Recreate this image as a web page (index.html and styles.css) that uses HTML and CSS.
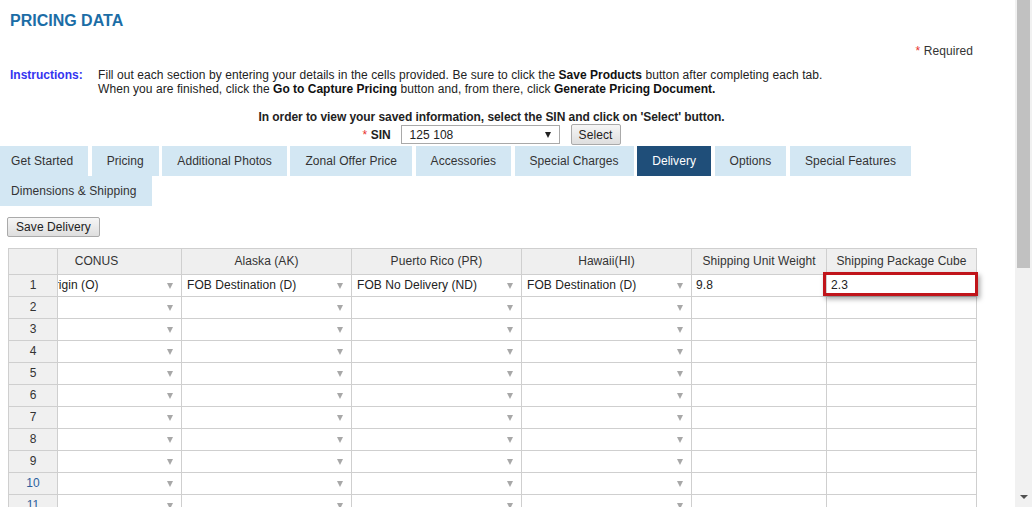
FILE: index.html
```html
<!DOCTYPE html>
<html lang="en">
<head>
<meta charset="utf-8">
<title>Pricing Data</title>
<link rel="stylesheet" href="styles.css">
</head>
<body>
<div class="page">
  <main class="main">
    <div class="head">
      <h1 class="title">PRICING DATA</h1>
      <div class="required"><span class="star">*</span> Required</div>
      <div class="instructions">
        <div class="instr-label">Instructions:</div>
        <div class="instr-text">Fill out each section by entering your details in the cells provided. Be sure to click the <b>Save Products</b> button after completing each tab.<br>When you are finished, click the <b>Go to Capture Pricing</b> button and, from there, click <b>Generate Pricing Document.</b></div>
      </div>
      <p class="view-note">In order to view your saved information, select the SIN and click on 'Select' button.</p>
      <div class="sin-row">
        <span class="sin-label"><span class="star">*</span> <b>SIN</b></span>
        <div class="sin-select"><span>125 108</span><span class="caret-dark"></span></div>
        <button class="btn btn-select">Select</button>
      </div>
    </div>
    <nav class="tabs">
      <span class="tab">Get Started</span>
      <span class="tab">Pricing</span>
      <span class="tab">Additional Photos</span>
      <span class="tab">Zonal Offer Price</span>
      <span class="tab">Accessories</span>
      <span class="tab">Special Charges</span>
      <span class="tab active">Delivery</span>
      <span class="tab">Options</span>
      <span class="tab">Special Features</span>
      <span class="tab">Dimensions &amp; Shipping</span>
    </nav>
    <button class="btn btn-save">Save Delivery</button>
    <div class="grid">
      <div class="hc rn"></div>
      <div class="hc clip"><div class="shift">CONUS</div></div>
      <div class="hc">Alaska (AK)</div>
      <div class="hc">Puerto Rico (PR)</div>
      <div class="hc">Hawaii(HI)</div>
      <div class="hc">Shipping Unit Weight</div>
      <div class="hc">Shipping Package Cube</div>

      <div class="c rn">1</div>
      <div class="c clip"><div class="shift dd"><span>FOB Origin (O)</span><i class="caret"></i></div></div>
      <div class="c dd"><span>FOB Destination (D)</span><i class="caret"></i></div>
      <div class="c dd"><span>FOB No Delivery (ND)</span><i class="caret"></i></div>
      <div class="c dd"><span>FOB Destination (D)</span><i class="caret"></i></div>
      <div class="c txt">9.8</div>
      <div class="c txt sel">2.3<span class="focus-box"></span></div>

      <div class="c rn">2</div><div class="c clip"><div class="shift dd"><span></span><i class="caret"></i></div></div><div class="c dd"><span></span><i class="caret"></i></div><div class="c dd"><span></span><i class="caret"></i></div><div class="c dd"><span></span><i class="caret"></i></div><div class="c txt"></div><div class="c txt"></div>
      <div class="c rn">3</div><div class="c clip"><div class="shift dd"><span></span><i class="caret"></i></div></div><div class="c dd"><span></span><i class="caret"></i></div><div class="c dd"><span></span><i class="caret"></i></div><div class="c dd"><span></span><i class="caret"></i></div><div class="c txt"></div><div class="c txt"></div>
      <div class="c rn">4</div><div class="c clip"><div class="shift dd"><span></span><i class="caret"></i></div></div><div class="c dd"><span></span><i class="caret"></i></div><div class="c dd"><span></span><i class="caret"></i></div><div class="c dd"><span></span><i class="caret"></i></div><div class="c txt"></div><div class="c txt"></div>
      <div class="c rn">5</div><div class="c clip"><div class="shift dd"><span></span><i class="caret"></i></div></div><div class="c dd"><span></span><i class="caret"></i></div><div class="c dd"><span></span><i class="caret"></i></div><div class="c dd"><span></span><i class="caret"></i></div><div class="c txt"></div><div class="c txt"></div>
      <div class="c rn">6</div><div class="c clip"><div class="shift dd"><span></span><i class="caret"></i></div></div><div class="c dd"><span></span><i class="caret"></i></div><div class="c dd"><span></span><i class="caret"></i></div><div class="c dd"><span></span><i class="caret"></i></div><div class="c txt"></div><div class="c txt"></div>
      <div class="c rn">7</div><div class="c clip"><div class="shift dd"><span></span><i class="caret"></i></div></div><div class="c dd"><span></span><i class="caret"></i></div><div class="c dd"><span></span><i class="caret"></i></div><div class="c dd"><span></span><i class="caret"></i></div><div class="c txt"></div><div class="c txt"></div>
      <div class="c rn">8</div><div class="c clip"><div class="shift dd"><span></span><i class="caret"></i></div></div><div class="c dd"><span></span><i class="caret"></i></div><div class="c dd"><span></span><i class="caret"></i></div><div class="c dd"><span></span><i class="caret"></i></div><div class="c txt"></div><div class="c txt"></div>
      <div class="c rn">9</div><div class="c clip"><div class="shift dd"><span></span><i class="caret"></i></div></div><div class="c dd"><span></span><i class="caret"></i></div><div class="c dd"><span></span><i class="caret"></i></div><div class="c dd"><span></span><i class="caret"></i></div><div class="c txt"></div><div class="c txt"></div>
      <div class="c rn link">10</div><div class="c clip"><div class="shift dd"><span></span><i class="caret"></i></div></div><div class="c dd"><span></span><i class="caret"></i></div><div class="c dd"><span></span><i class="caret"></i></div><div class="c dd"><span></span><i class="caret"></i></div><div class="c txt"></div><div class="c txt"></div>
      <div class="c rn link">11</div><div class="c clip"><div class="shift dd"><span></span><i class="caret"></i></div></div><div class="c dd"><span></span><i class="caret"></i></div><div class="c dd"><span></span><i class="caret"></i></div><div class="c dd"><span></span><i class="caret"></i></div><div class="c txt"></div><div class="c txt"></div>
    </div>
  </main>
  <div class="scrollbar">
    <div class="thumb"></div>
    <div class="arrow-down"></div>
  </div>
</div>
</body>
</html>
```

FILE: styles.css
```css
* { box-sizing: border-box; }

html, body {
  margin: 0;
  height: 507px;
  overflow: hidden;
  background: #fff;
}

body {
  font-family: "Liberation Sans", Arial, sans-serif;
  font-size: 12px;
  color: #222;
  letter-spacing: 0.07px;
}

b { letter-spacing: 0; }

.page {
  display: flex;
  height: 507px;
}

.main {
  width: 1015px;
  flex: none;
  overflow: hidden;
}

.head {
  margin-right: 31px;
  padding: 0 11px 0 10px;
}

.title {
  margin: 0;
  padding-top: 11px;
  font-size: 16px;
  line-height: 20px;
  font-weight: bold;
  letter-spacing: 0;
  color: #1b6da6;
}

.required {
  margin-top: 13px;
  text-align: right;
  line-height: 14px;
  color: #333;
}

.star { color: #e8322e; }

.instructions {
  margin-top: 10px;
  display: grid;
  grid-template-columns: 88px auto;
  line-height: 14px;
}

.instr-label {
  font-weight: bold;
  letter-spacing: 0;
  color: #3434f0;
}

.instr-text { color: #222; white-space: nowrap; }
.instr-text b { color: #111; }

.view-note {
  margin: 14px 0 0;
  text-align: center;
  font-weight: bold;
  letter-spacing: -0.06px;
  line-height: 14px;
  color: #222;
}

.sin-row {
  display: flex;
  justify-content: center;
  align-items: center;
  height: 21px;
}

.sin-label {
  width: 28px;
  color: #222;
  white-space: nowrap;
}

.sin-select {
  margin-left: 10px;
  width: 159px;
  height: 19px;
  border: 1px solid #a9a9a9;
  display: flex;
  align-items: center;
  justify-content: space-between;
  padding: 0 8px 0 8px;
  color: #222;
}

.caret-dark {
  width: 0;
  height: 0;
  border-left: 3.5px solid transparent;
  border-right: 3.5px solid transparent;
  border-top: 6px solid #222;
}

.btn {
  font-family: "Liberation Sans", Arial, sans-serif;
  font-size: 12px;
  letter-spacing: 0.07px;
  color: #222;
  background: linear-gradient(#f6f6f6, #dedede);
  border: 1px solid #aaa;
  border-radius: 2px;
  padding: 0 7px;
  line-height: 18px;
}

.btn-select {
  margin-left: 11px;
  width: 50px;
  height: 21px;
}

.tabs {
  margin: 1px 0 0 -4px;
  display: flex;
  flex-wrap: wrap;
  column-gap: 3.5px;
}

.tab {
  padding: 0 15px;
  line-height: 30px;
  height: 30px;
  background: #d3e7f3;
  color: #333;
  white-space: nowrap;
}

.tab.active {
  background: #1f4e79;
  color: #fff;
}

.btn-save {
  display: block;
  margin: 11px 0 0 7px;
  height: 20px;
  padding: 0 8px;
}

.grid {
  margin: 11px 0 0 8px;
  width: 969px;
  display: grid;
  grid-template-columns: 49px 124px 170px 170px 170px 135px 150px;
  grid-template-rows: 26px;
  grid-auto-rows: 22px;
  border-top: 1px solid #cfcfcf;
  border-left: 1px solid #cfcfcf;
}

.hc, .c {
  border-right: 1px solid #cfcfcf;
  border-bottom: 1px solid #cfcfcf;
  white-space: nowrap;
}

.hc {
  background: #efefef;
  color: #333;
  text-align: center;
  line-height: 25px;
}

.hc .shift { text-align: center; }

.c {
  background: #fff;
  line-height: 21px;
}

.c.rn {
  background: #f0f0f0;
  text-align: center;
  color: #333;
}

.c.rn.link { color: #2c5f9e; }

.clip { overflow: hidden; }

.shift {
  width: 169px;
  margin-left: -46px;
  height: 100%;
}

.dd {
  display: flex;
  align-items: center;
  justify-content: space-between;
  padding: 0 8px 0 5px;
}

.caret {
  width: 0;
  height: 0;
  border-left: 3.5px solid transparent;
  border-right: 3.5px solid transparent;
  border-top: 6px solid #a8a8a8;
}

.txt { padding-left: 4px; }

.sel { position: relative; }

.focus-box {
  position: absolute;
  left: -4px;
  top: -3px;
  right: -2px;
  bottom: 0;
  border: 3px solid #c0141a;
  box-shadow: 2px 3px 5px rgba(0, 0, 0, 0.35);
  z-index: 2;
}

.scrollbar {
  width: 17px;
  flex: none;
  background: #f1f1f1;
  display: flex;
  flex-direction: column;
  align-items: center;
}

.thumb {
  width: 13px;
  height: 268px;
  background: #c1c1c1;
}

.arrow-down {
  margin-top: auto;
  margin-bottom: 8px;
  width: 0;
  height: 0;
  border-left: 4px solid transparent;
  border-right: 4px solid transparent;
  border-top: 4px solid #505050;
}
```
